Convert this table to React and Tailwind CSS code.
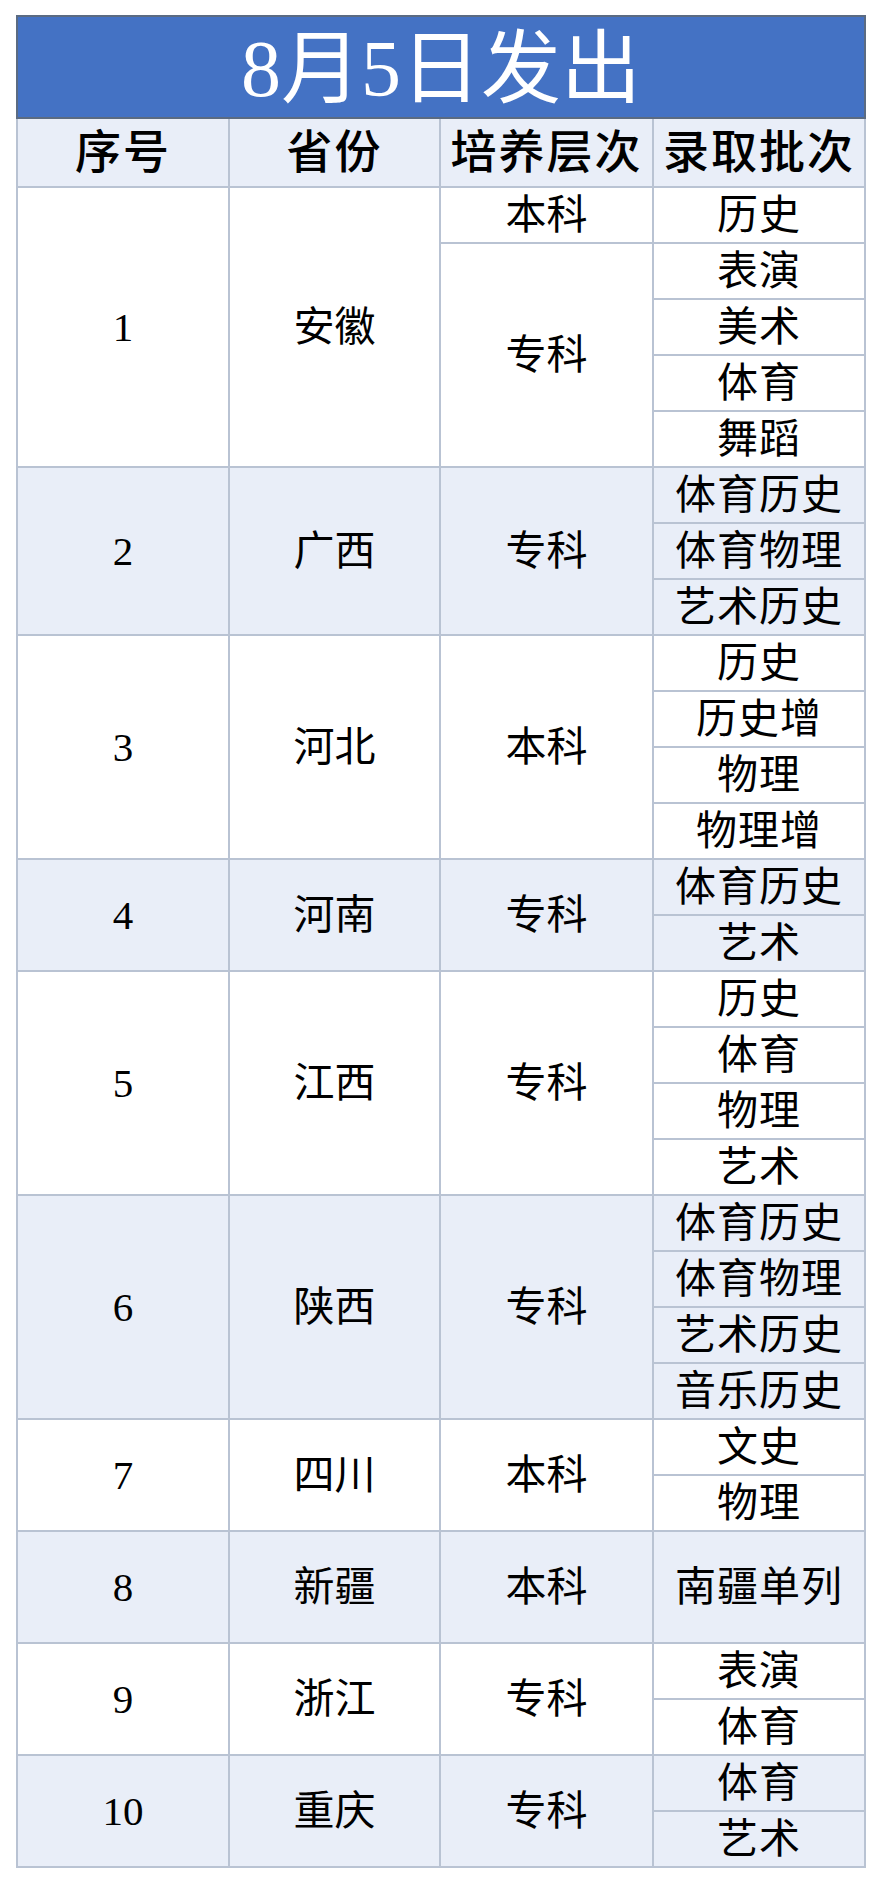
import React from "react";

const rows = [
  { n: "1", p: "安徽", levels: [{ l: "本科", items: ["历史"] }, { l: "专科", items: ["表演", "美术", "体育", "舞蹈"] }] },
  { n: "2", p: "广西", levels: [{ l: "专科", items: ["体育历史", "体育物理", "艺术历史"] }] },
  { n: "3", p: "河北", levels: [{ l: "本科", items: ["历史", "历史增", "物理", "物理增"] }] },
  { n: "4", p: "河南", levels: [{ l: "专科", items: ["体育历史", "艺术"] }] },
  { n: "5", p: "江西", levels: [{ l: "专科", items: ["历史", "体育", "物理", "艺术"] }] },
  { n: "6", p: "陕西", levels: [{ l: "专科", items: ["体育历史", "体育物理", "艺术历史", "音乐历史"] }] },
  { n: "7", p: "四川", levels: [{ l: "本科", items: ["文史", "物理"] }] },
  { n: "8", p: "新疆", levels: [{ l: "本科", items: ["南疆单列"], span: 2 }] },
  { n: "9", p: "浙江", levels: [{ l: "专科", items: ["表演", "体育"] }] },
  { n: "10", p: "重庆", levels: [{ l: "专科", items: ["体育", "艺术"] }] },
];

const font = { fontFamily: '"Liberation Serif", "Noto Sans CJK SC", serif' };
const cell = "border-2 border-[#b9c3d3] text-center align-middle p-0 text-[41px] leading-none text-black";

export default function App() {
  const trs = [];
  rows.forEach((r, ri) => {
    const bg = ri % 2 === 1 ? "bg-[#e9eef8]" : "bg-white";
    const total = r.levels.reduce((s, lv) => s + (lv.span || lv.items.length), 0);
    let first = true;
    r.levels.forEach((lv, li) => {
      const lvRows = lv.span || lv.items.length;
      lv.items.forEach((it, ii) => {
        trs.push(
          <tr key={`${ri}-${li}-${ii}`} className={`h-[56px] ${bg}`}>
            {first && (
              <>
                <td rowSpan={total} className={cell}>{r.n}</td>
                <td rowSpan={total} className={cell}>{r.p}</td>
              </>
            )}
            {ii === 0 && (
              <td rowSpan={lvRows} className={cell}>{lv.l}</td>
            )}
            <td rowSpan={lv.span || 1} className={`${cell} tracking-[1px]`}>{it}</td>
          </tr>
        );
        first = false;
      });
      if (lv.span && lv.span > lv.items.length) {
        for (let k = lv.items.length; k < lv.span; k++) {
          trs.push(<tr key={`${ri}-${li}-pad${k}`} className={`h-[56px] ${bg}`}></tr>);
        }
      }
    });
  });

  return (
    <div className="w-[880px] h-[1882px] bg-white pt-[15px] pl-[16px]" style={font}>
      <table className="w-[848px] border-collapse table-fixed border-2 border-[#5b6b82]">
        <colgroup>
          <col className="w-[212px]" />
          <col className="w-[211px]" />
          <col className="w-[213px]" />
          <col className="w-[212px]" />
        </colgroup>
        <tbody>
          <tr className="h-[102px] bg-[#4472c4]">
            <td colSpan={4} className="border-2 border-[#5b6b82] text-center align-middle text-white text-[80px] leading-none pt-[4px]">
              8月5日发出
            </td>
          </tr>
          <tr className="h-[69px] bg-[#e9eef8]">
            {["序号", "省份", "培养层次", "录取批次"].map((h) => (
              <td key={h} className="border-2 border-[#b9c3d3] text-center align-middle text-[46px] leading-none font-medium text-black tracking-[2px]">
                {h}
              </td>
            ))}
          </tr>
          {trs}
        </tbody>
      </table>
    </div>
  );
}
